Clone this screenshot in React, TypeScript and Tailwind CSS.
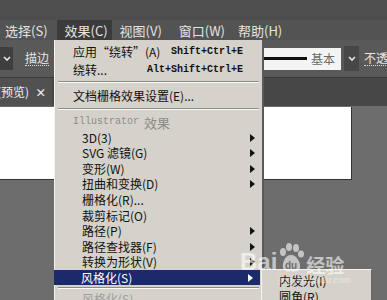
import React from "react";

const cjk = { fontFamily: '"Noto Sans CJK SC", "Noto Sans", sans-serif' };
const mono = { fontFamily: '"Liberation Mono", "Noto Sans CJK SC", monospace' };

function Arrow() {
  return (
    <svg width="5" height="8" viewBox="0 0 5 8" className="absolute right-[7px] top-1/2 -translate-y-1/2">
      <path d="M0 0 L5 4 L0 8 Z" fill="currentColor" />
    </svg>
  );
}

function Chevron() {
  return (
    <svg width="8" height="5" viewBox="0 0 8 5">
      <path d="M1 1 L4 4 L7 1" stroke="#e8e8e8" strokeWidth="1.6" fill="none" />
    </svg>
  );
}

function Sep({ h, pt }: { h: string; pt: string }) {
  return (
    <div className={`${h} ${pt} px-[3px]`}>
      <div className="h-px bg-[#8c8a86]" />
      <div className="h-px bg-[#fbfaf8]" />
    </div>
  );
}

type Item = { label: string; arrow?: boolean; active?: boolean };

const items: Item[] = [
  { label: "3D(3)", arrow: true },
  { label: "SVG 滤镜(G)", arrow: true },
  { label: "变形(W)", arrow: true },
  { label: "扭曲和变换(D)", arrow: true },
  { label: "栅格化(R)..." },
  { label: "裁剪标记(O)" },
  { label: "路径(P)", arrow: true },
  { label: "路径查找器(F)", arrow: true },
  { label: "转换为形状(V)", arrow: true },
  { label: "风格化(S)", arrow: true, active: true },
];

export default function App() {
  return (
    <div className="relative w-[387px] h-[300px] overflow-hidden bg-[#6d6d6d]" style={cjk}>
      {/* top band */}
      <div className="h-[20px] bg-[#4e4e4e]" />
      {/* menu bar */}
      <div className="h-[20px] bg-[#535353] flex items-center text-[13px] text-[#e4e4e4] leading-none whitespace-nowrap">
        <span className="ml-[5px]">选择(S)</span>
        <span className="ml-[9px] h-[20px] w-[55px] bg-[#3b3b3b] flex items-center pl-[8px]">效果(C)</span>
        <span className="ml-[8px]">视图(V)</span>
        <span className="ml-[17px]">窗口(W)</span>
        <span className="ml-[13px]">帮助(H)</span>
      </div>
      {/* control bar */}
      <div className="h-[37px] bg-[#595959] flex items-center text-[12px] text-[#e6e6e6] leading-none whitespace-nowrap">
        <div className="shrink-0 w-[13px] h-[23px] bg-[#3f3f3f] flex items-center justify-center">
          <Chevron />
        </div>
        <span className="shrink-0 ml-[12px] border-b border-dotted border-[#dcdcdc] pb-[1px]">描边</span>
        <div className="shrink-0 ml-[160px] w-[132px] h-[22px] bg-[#f4f4f4] flex items-center">
          <div className="w-[98px] h-[3px] bg-[#111]" />
          <span className="ml-[4px] text-[#6a6a6a]">基本</span>
        </div>
        <div className="shrink-0 ml-[3px] w-[15px] h-[25px] bg-[#474747] flex items-center justify-center">
          <Chevron />
        </div>
        <span className="shrink-0 ml-[5px] border-b border-dotted border-[#dcdcdc] pb-[1px]">不透明度</span>
      </div>
      <div className="h-px bg-[#3a3a3a]" />
      {/* tab bar */}
      <div className="h-[28px] bg-[#474747] flex items-stretch">
        <div className="w-[52px] bg-[#515151] flex items-center text-[12px] text-[#f0f0f0] leading-none overflow-hidden whitespace-nowrap">
          <span className="shrink-0 -ml-[3px]">(预览)</span>
          <span className="shrink-0 ml-[6px] text-[11px] font-bold">×</span>
        </div>
      </div>
      {/* canvas */}
      <div className="pt-px">
        <div className="w-[352px] h-[73px] bg-white border-r border-b border-[#333]" />
      </div>

      {/* dropdown menu */}
      <div className="absolute left-[54px] top-[40px] w-[210px] h-[262px] bg-[#d5d2cb] border-l border-[#f4f3f0] border-r-2 border-r-[#5a5a5a] text-[12px] text-[#111] leading-none whitespace-nowrap">
        <div className="pt-[3px]">
          <div className="h-[18px] flex items-center pl-[18px] relative">
            <span>应用“绕转”(A)</span>
            <span className="absolute right-[19px] text-[10px] font-bold" style={mono}>Shift+Ctrl+E</span>
          </div>
          <div className="h-[17px] flex items-center pl-[18px] relative">
            <span>绕转...</span>
            <span className="absolute right-[19px] text-[10px] font-bold" style={mono}>Alt+Shift+Ctrl+E</span>
          </div>
          <Sep h="h-[9px]" pt="pt-[3px]" />
          <div className="h-[18px] flex items-center pl-[18px]">
            <span>文档栅格效果设置(E)...</span>
          </div>
          <Sep h="h-[9px]" pt="pt-[3px]" />
          <div className="h-[16px] flex items-center pl-[18px] text-[#8e8c88]">
            <span style={mono} className="text-[10px]">Illustrator</span>
            <span className="ml-[5px] text-[13px]">效果</span>
          </div>
          {items.map((it) => (
            <div
              key={it.label}
              className={`h-[15.55px] flex items-center pl-[27px] relative ${it.active ? "bg-[#1b2a6b] text-white -ml-px mr-[2px]" : ""}`}
            >
              <span>{it.label}</span>
              {it.arrow && <Arrow />}
            </div>
          ))}
          <Sep h="h-[6px]" pt="pt-[2px]" />
          <div className="h-[15px] flex items-center pl-[27px] text-[#a09e9a]">
            <span>风格化(S)</span>
          </div>
        </div>
      </div>

      {/* submenu */}
      <div className="absolute left-[261px] top-[269px] w-[111px] h-[40px] bg-[#d5d2cb] border-l border-t border-[#f4f3f0] border-r border-r-[#6a6a6a] text-[12px] text-[#111] leading-none whitespace-nowrap">
        <div className="h-[17px] mt-[2px] flex items-center pl-[17px]">内发光(I)</div>
        <div className="h-[15px] flex items-center pl-[17px]">圆角(R)</div>
      </div>

      {/* watermark */}
      <div className="absolute left-[240px] top-[243px] text-white opacity-60 pointer-events-none">
        <div className="flex items-end">
          <span className="text-[24px] font-bold leading-none" style={{ fontFamily: '"Liberation Sans", Arial, sans-serif' }}>Bai</span>
          <svg width="28" height="30" viewBox="0 0 28 30" className="mb-[1px]">
            <ellipse cx="6" cy="9" rx="3" ry="4" fill="white" />
            <ellipse cx="12" cy="4" rx="3" ry="4" fill="white" />
            <ellipse cx="19" cy="5" rx="3" ry="4" fill="white" />
            <ellipse cx="24" cy="11" rx="3" ry="3.5" fill="white" />
            <path d="M14 12 C8 12 5 20 6 25 C7 29 11 29 14 28 C17 29 22 29 23 25 C24 20 20 12 14 12 Z" fill="white" />
            <text x="14" y="26" textAnchor="middle" fontSize="10" fontWeight="bold" fill="#6d6d6d" fontFamily="Liberation Sans, sans-serif">du</text>
          </svg>
          <span className="text-[19px] leading-none ml-[1px] font-bold">经验</span>
        </div>
        <div className="ml-[38px] mt-[2px] text-[9px] leading-none opacity-80" style={{ fontFamily: '"Liberation Sans", sans-serif' }}>
          jingyan.baidu.com
        </div>
      </div>
    </div>
  );
}
